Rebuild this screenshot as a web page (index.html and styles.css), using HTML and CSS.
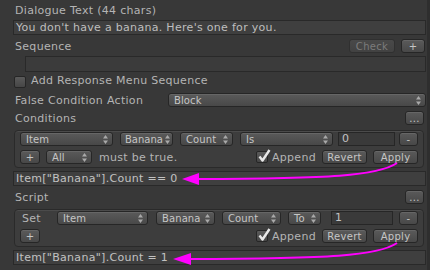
FILE: index.html
```html
<!DOCTYPE html>
<html lang="en">
<head>
    <meta charset="UTF-8">
    <title>Dialogue Entry Inspector</title>
    <link rel="stylesheet" href="styles.css">
</head>
<body>
    <svg width="0" height="0" class="defs">
        <symbol id="updown" viewBox="0 0 5 9">
            <path d="M2.5 0 L5 3.5 H0 Z M2.5 9 L5 5.5 H0 Z" fill="#a9a9a9"/>
        </symbol>
        <symbol id="tick" viewBox="0 0 14 14">
            <path d="M2.5 7.5 L5.5 11.5 L12.5 1" fill="none" stroke="#e8e8e8" stroke-width="2.4" stroke-linejoin="round"/>
        </symbol>
    </svg>

    <div class="inspector">
        <div class="row"><span class="label">Dialogue Text (44 chars)</span></div>
        <div class="field">You don't have a banana. Here's one for you.</div>

        <div class="row">
            <span class="label grow">Sequence</span>
            <button class="btn disabled check-btn">Check</button>
            <button class="btn plus-wide">+</button>
        </div>
        <div class="field area"></div>

        <div class="row">
            <span class="checkbox"></span>
            <span class="label toggle-label">Add Response Menu Sequence</span>
        </div>

        <div class="row">
            <span class="label prefix">False Condition Action</span>
            <span class="popup grow">Block<svg class="arr"><use href="#updown"/></svg></span>
        </div>

        <div class="row spaced">
            <span class="label grow">Conditions</span>
            <button class="btn more">...</button>
        </div>

        <div class="box">
            <div class="line">
                <span class="popup w93">Item<svg class="arr"><use href="#updown"/></svg></span>
                <span class="popup w53 tight">Banana<svg class="arr"><use href="#updown"/></svg></span>
                <span class="popup w53">Count<svg class="arr"><use href="#updown"/></svg></span>
                <span class="popup w93">Is<svg class="arr"><use href="#updown"/></svg></span>
                <span class="num cond-num">0</span>
                <button class="btn minus">-</button>
            </div>
            <div class="line">
                <button class="btn plus">+</button>
                <span class="popup w46">All<svg class="arr"><use href="#updown"/></svg></span>
                <span class="label must grow">must be true.</span>
                <span class="checkbox checked"><svg class="tick"><use href="#tick"/></svg></span>
                <span class="label append">Append</span>
                <button class="btn action">Revert</button>
                <button class="btn action">Apply</button>
            </div>
        </div>
        <div class="field result">Item["Banana"].Count == 0</div>

        <div class="row spaced">
            <span class="label grow">Script</span>
            <button class="btn more">...</button>
        </div>

        <div class="box">
            <div class="line">
                <span class="label set">Set</span>
                <span class="popup w91">Item<svg class="arr"><use href="#updown"/></svg></span>
                <span class="popup w59">Banana<svg class="arr"><use href="#updown"/></svg></span>
                <span class="popup w59">Count<svg class="arr"><use href="#updown"/></svg></span>
                <span class="popup w33">To<svg class="arr"><use href="#updown"/></svg></span>
                <span class="num set-num">1</span>
                <button class="btn minus">-</button>
            </div>
            <div class="line">
                <button class="btn plus grow-after">+</button>
                <span class="checkbox checked"><svg class="tick"><use href="#tick"/></svg></span>
                <span class="label append">Append</span>
                <button class="btn action">Revert</button>
                <button class="btn action">Apply</button>
            </div>
        </div>
        <div class="field result last">Item["Banana"].Count = 1</div>
    </div>

    <!-- fleches de l'annotation, par-dessus le contenu -->
    <svg class="arrows" width="430" height="270" viewBox="0 0 430 270">
        <path d="M397 163 C378 176 330 178.5 196 179" fill="none" stroke="#f0f" stroke-width="2"/>
        <path d="M182 179 L199 173 L199 185 Z" fill="#f0f"/>
        <path d="M397 243 C378 256 330 258.5 188 259" fill="none" stroke="#f0f" stroke-width="2"/>
        <path d="M173 259 L191 253 L191 265 Z" fill="#f0f"/>
    </svg>
</body>
</html>
```

FILE: styles.css
```css
* {
    box-sizing: border-box;
}

body {
    margin: 0;
    width: 430px;
    height: 270px;
    overflow: hidden;
    background-color: #383838;
    font-family: 'DejaVu Sans', sans-serif;
    font-size: 11px;
    letter-spacing: 0.3px;
    color: #b4b4b4;
    position: relative;
}

.defs {
    position: absolute;
}

.inspector {
    width: 430px;
    height: 270px;
    padding: 2px 1px 0 13px;
    border-right: 3px solid #2e2e2e;
    display: flex;
    flex-direction: column;
}

.row {
    height: 16px;
    margin-bottom: 2px;
    display: flex;
    align-items: center;
}

.row.spaced {
    margin-bottom: 4px;
}

.label {
    padding-left: 2px;
    white-space: nowrap;
}

.grow {
    flex: 1;
}

.prefix {
    width: 155px;
}

.field {
    height: 15px;
    margin-bottom: 3px;
    padding: 0 2px;
    border: 1px solid #292929;
    background-color: #3f3f3f;
    color: #bebebe;
    line-height: 13px;
    white-space: nowrap;
}

.field.area {
    height: 16px;
    margin-left: 12px;
    margin-bottom: 2px;
    background-color: #3b3b3b;
}

.btn, .popup {
    height: 14px;
    padding: 0;
    border: 1px solid #262626;
    border-radius: 3px;
    background: linear-gradient(#5a5a5a, #484848);
    box-shadow: inset 0 1px 0 #666;
    color: #c6c6c6;
    font-family: inherit;
    font-size: 10px;
    letter-spacing: 0.3px;
    display: flex;
    align-items: center;
    justify-content: center;
    flex-shrink: 0;
}

.btn.disabled {
    background: linear-gradient(#494949, #424242);
    box-shadow: none;
    border-color: #303030;
    color: #7c7c7c;
}

.check-btn {
    width: 46px;
    margin-right: 6px;
}

.plus-wide {
    width: 24px;
    margin-right: 1px;
}

.more {
    width: 19px;
    margin-right: 2px;
}

.popup {
    justify-content: space-between;
    padding: 0 4px 0 5px;
    letter-spacing: 0.1px;
}

.popup.tight {
    padding: 0 2px 0 4px;
    letter-spacing: 0;
}

.arr {
    width: 5px;
    height: 9px;
}

.checkbox {
    width: 12px;
    height: 12px;
    margin-left: 1px;
    border: 1px solid #262626;
    border-radius: 2px;
    background: linear-gradient(#5a5a5a, #464646);
    position: relative;
    flex-shrink: 0;
}

.checkbox .tick {
    position: absolute;
    left: 0;
    top: -3px;
    width: 14px;
    height: 14px;
}

.toggle-label {
    margin-left: 3px;
    margin-top: -3px;
}

.box {
    height: 38px;
    margin: 0 2px 3px 1px;
    padding: 1px 5px 0 5px;
    border: 1px solid #2a2a2a;
    border-radius: 4px;
    background-color: #3d3d3d;
    box-shadow: inset 0 1px 0 #4b4b4b;
}

.line {
    height: 14px;
    margin-bottom: 4px;
    display: flex;
    align-items: center;
}

.w93 { width: 93px; margin-right: 7px; }
.w53 { width: 53px; margin-right: 7px; }
.w46 { width: 46px; margin-left: 6px; }
.w91 { width: 91px; margin-right: 8px; }
.w59 { width: 59px; margin-right: 7px; }
.w33 { width: 33px; margin-right: 10px; }

.num {
    height: 14px;
    border: 1px solid #262626;
    background-color: #3a3a3a;
    color: #c2c2c2;
    padding: 0 3px;
    line-height: 12px;
    font-size: 11px;
}

.cond-num {
    width: 57px;
    margin-left: -2px;
    margin-right: 4px;
}

.set-num {
    width: 62px;
    margin-right: 6px;
}

.minus {
    width: 19px;
}

.plus {
    width: 20px;
}

.grow-after {
    margin-right: auto;
}

.must {
    padding-left: 7px;
}

.append {
    padding-left: 4px;
    margin-right: 6px;
}

.action {
    width: 45px;
    margin-right: 6px;
}

.action:last-child {
    margin-right: 0;
}

.set {
    width: 37px;
    padding-left: 2px;
}

.result {
    color: #c2c2c2;
}

.arrows {
    position: absolute;
    left: 0;
    top: 0;
    pointer-events: none;
}
```
